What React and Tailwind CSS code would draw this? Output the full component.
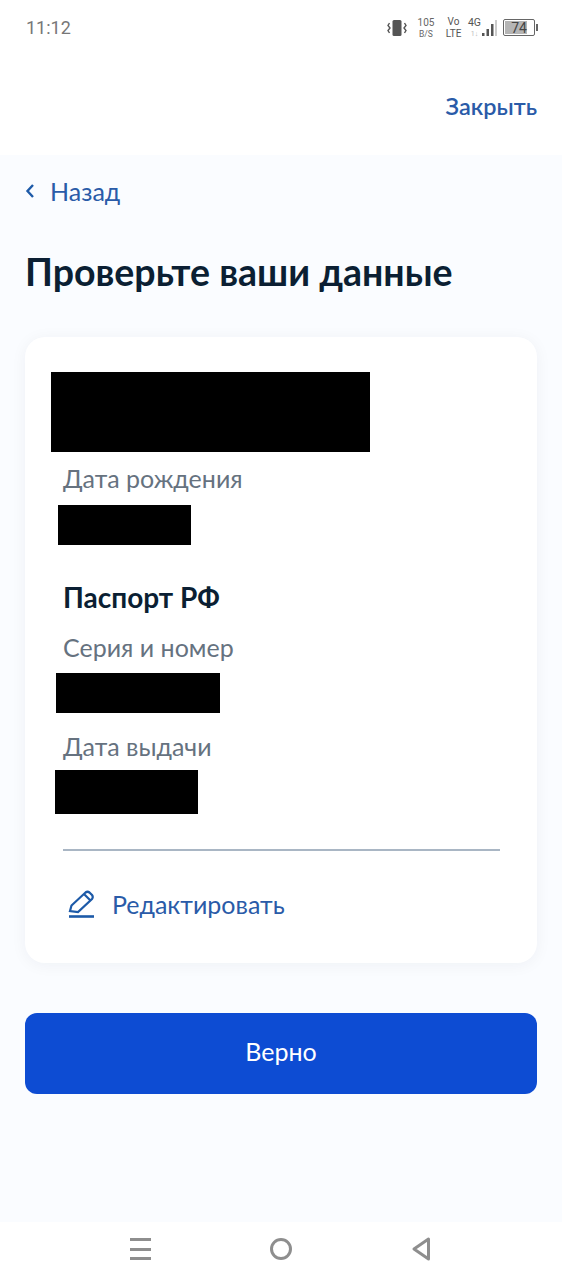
const Redacted = ({ className }) => <div className={`bg-black ${className}`} />;

const StatusBar = () => (
  <div className="flex h-[56px] items-center justify-between pl-[26px] pr-[24px] pb-[1px] font-['Roboto',sans-serif] text-[#777]">
    <span className="text-[18px] leading-none">11:12</span>
    <div className="flex items-center">
      {/* vibrate */}
      <svg width="20" height="18" viewBox="0 0 20 18" fill="none" className="mr-[9px]">
        <rect x="5.5" y="1" width="9" height="16" rx="1.5" fill="#555" />
        <path d="M2.5 4 L1 6.5 L3 9 L1 11.5 L2.5 14 M17.5 4 L19 6.5 L17 9 L19 11.5 L17.5 14" stroke="#555" strokeWidth="1.4" />
      </svg>
      <div className="flex w-[20px] flex-col items-center text-[10px] leading-[12px] text-[#666]">
        <span>105</span>
        <span className="text-[8.5px] leading-[10px]">B/S</span>
      </div>
      <div className="ml-[9px] flex w-[17px] flex-col items-center text-[10px] leading-[12px] text-[#555]">
        <span>Vo</span>
        <span>LTE</span>
      </div>
      <div className="ml-[4px] flex w-[17px] flex-col items-center text-[10.5px] leading-[12px] text-[#555]">
        <span>4G</span>
        <span className="text-[7px] leading-[10px] text-[#bbb]">1↓</span>
      </div>
      <svg width="15" height="18" viewBox="0 0 15 18" className="mr-[6px] -ml-[1px]">
        <rect x="0" y="14" width="2.5" height="3" fill="#555" />
        <rect x="4.5" y="10" width="2.5" height="7" fill="#555" />
        <rect x="9" y="5" width="2.5" height="12" fill="#555" />
        <rect x="13" y="1" width="2" height="16" fill="#ccc" />
      </svg>
      <div className="relative flex h-[17px] w-[32px] items-center justify-center rounded-[2px] border border-[#666] text-[14px] leading-none text-[#444]">
        <div className="absolute inset-y-[1px] left-[1px] w-[22px] bg-[#b5b5b5]" />
        <span className="relative">74</span>
      </div>
      <div className="ml-[1px] h-[7px] w-[2px] bg-[#666]" />
    </div>
  </div>
);

const Label = ({ children, className }) => (
  <div className={`text-[25px] leading-[30px] text-[#66727f] ${className}`}>{children}</div>
);

export default function App() {
  return (
    <div className="flex h-[1280px] w-[562px] flex-col overflow-hidden bg-white font-['Lato',sans-serif]">
      <StatusBar />

      <div className="flex h-[99px] justify-end pr-[25px] pt-[35px]">
        <span className="text-[23.5px] font-semibold leading-[30px] text-[#2a5ba8]">Закрыть</span>
      </div>

      <main className="flex flex-1 flex-col bg-[#fafcff] px-[25px]">
        <div className="mt-[21px] flex h-[30px] items-center">
          <svg width="10" height="16" viewBox="0 0 10 16" fill="none" stroke="#1d5aa8" strokeWidth="2.4">
            <path d="M8 2 L2.5 8 L8 14" />
          </svg>
          <span className="ml-[15px] text-[25px] leading-[30px] text-[#2a5ba8]">Назад</span>
        </div>

        <h1 className="mt-[44px] text-[37.5px] font-bold leading-[44px] text-[#0b1f33]">Проверьте ваши данные</h1>

        <section className="mt-[43px] flex h-[626px] flex-col rounded-[20px] bg-white pt-[35px] shadow-[0_2px_16px_rgba(11,31,51,0.05)]">
          <Redacted className="ml-[26px] h-[80px] w-[319px]" />
          <Label className="ml-[38px] mt-[11px]">Дата рождения</Label>
          <Redacted className="ml-[33px] mt-[12px] h-[40px] w-[133px]" />
          <div className="ml-[38px] mt-[35px] text-[28px] font-bold leading-[34px] text-[#0b1f33]">Паспорт РФ</div>
          <Label className="ml-[38px] mt-[18px]">Серия и номер</Label>
          <Redacted className="ml-[31px] mt-[11px] h-[40px] w-[164px]" />
          <Label className="ml-[38px] mt-[18px]">Дата выдачи</Label>
          <Redacted className="ml-[30px] mt-[9px] h-[44px] w-[143px]" />
          <div className="ml-[38px] mr-[37px] mt-[35px] h-[2px] bg-[#a9b6c4]" />
          <div className="ml-[43px] mt-[38px] flex items-center">
            <svg width="27" height="28" viewBox="0 0 27 28" fill="none" stroke="#1d5aa8" strokeWidth="2.2">
              <path d="M2 21 L3.5 15.5 L17.5 2.5 Q19.5 1 21.5 2.5 L24 5 Q25.5 7 24 9 L10 22 Z" />
              <path d="M16 4 L22.5 10.5" />
              <path d="M1 26.5 H26" strokeWidth="2.6" />
            </svg>
            <span className="ml-[17px] text-[25px] leading-[30px] text-[#2a5ba8]">Редактировать</span>
          </div>
        </section>

        <button className="mt-[50px] h-[81px] rounded-[12px] bg-[#0d4cd3] pb-[4px] text-[25px] text-white">Верно</button>
      </main>

      <nav className="flex h-[58px] items-start bg-white pl-[130px] pt-[16px]">
        <div className="flex h-[22px] w-[21px] flex-col justify-between">
          <div className="h-[3px] bg-[#8e8e8e]" />
          <div className="h-[3px] bg-[#8e8e8e]" />
          <div className="h-[3px] bg-[#8e8e8e]" />
        </div>
        <div className="ml-[119px] h-[22px] w-[22px] rounded-full border-[3px] border-[#8e8e8e]" />
        <svg width="18" height="24" viewBox="0 0 18 24" fill="none" stroke="#8e8e8e" strokeWidth="3" strokeLinejoin="round" className="ml-[120px] -mt-[1px]">
          <path d="M16.5 2 V22 L2 12 Z" />
        </svg>
      </nav>
    </div>
  );
}
